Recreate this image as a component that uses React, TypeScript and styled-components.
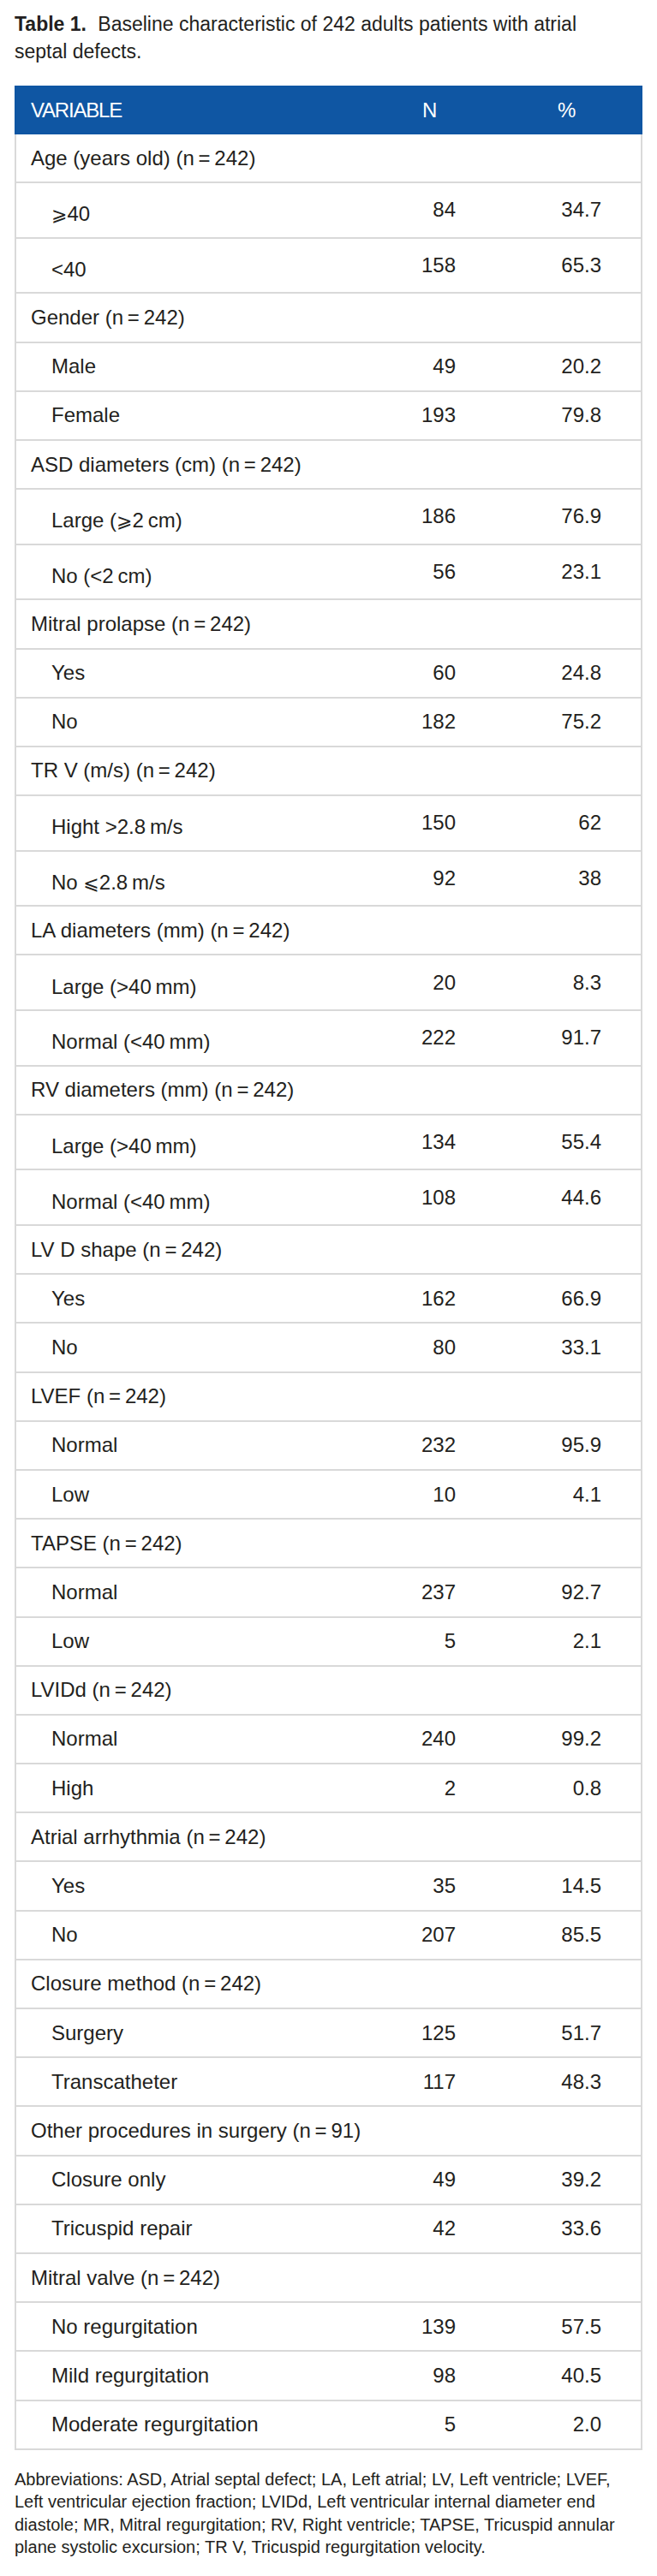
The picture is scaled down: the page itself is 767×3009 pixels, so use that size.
import React from "react";
import styled, { createGlobalStyle } from "styled-components";

const GlobalStyle = createGlobalStyle`
  html, body {
    margin: 0;
    padding: 0;
    background: #fff;
  }

  body {
    font-family: "Liberation Sans", Arial, sans-serif;
    color: #231f20;
  }
`;

const Page = styled.div`
  padding: 12px 17px 18px;
`;

const Caption = styled.p`
  margin: 0;
  font-size: 23px;
  line-height: 32px;
`;

const CaptionLabel = styled.strong`
  font-weight: 700;
  margin-right: 7px;
`;

const Table = styled.div`
  margin-top: 24px;
  display: flex;
  flex-direction: column;
`;

const HeaderRow = styled.div`
  display: grid;
  grid-template-columns: 1fr 77px 199px;
  align-items: center;
  height: 57px;
  padding: 0 2px;
  background: #0f56a3;
  color: #fff;
  font-size: 24px;
`;

const HeadCell = styled.div<{ $indent: number }>`
  padding-left: ${(p) => p.$indent}px;
  letter-spacing: -1.2px;
`;

const Row = styled.div<{ $tall?: boolean }>`
  display: grid;
  grid-template-columns: 1fr 77px 199px;
  align-items: center;
  box-sizing: border-box;
  height: ${(p) => (p.$tall ? "64.6px" : "57.2px")};
  border: 2px solid #d9d9d9;
  border-top: none;
  font-size: 24px;
`;

const Label = styled.div<{ $sub?: boolean; $tall?: boolean }>`
  padding-left: ${(p) => (p.$sub ? 41 : 17)}px;
  padding-top: ${(p) => (p.$tall ? 10 : 0)}px;
  white-space: nowrap;
`;

const Value = styled.div<{ $right: number }>`
  text-align: right;
  padding-right: ${(p) => p.$right}px;
`;

const Sym = styled.span`
  font-family: "DejaVu Sans", "Liberation Sans", sans-serif;
  font-size: 22px;
`;

const Footnote = styled.p`
  margin: 21px 0 0;
  font-size: 20px;
  line-height: 26.5px;
`;

interface RowData {
  label: React.ReactNode;
  n?: string;
  pct?: string;
  sub?: boolean;
  tall?: boolean;
}

const nn = (v: number) => `(n\u2009=\u2009${v})`;

const rows: RowData[] = [
  { label: `Age (years old) ${nn(242)}` },
  { label: <><Sym>⩾</Sym>40</>, n: "84", pct: "34.7", sub: true, tall: true },
  { label: "<40", n: "158", pct: "65.3", sub: true, tall: true },
  { label: `Gender ${nn(242)}` },
  { label: "Male", n: "49", pct: "20.2", sub: true },
  { label: "Female", n: "193", pct: "79.8", sub: true },
  { label: `ASD diameters (cm) ${nn(242)}` },
  { label: <>Large (<Sym>⩾</Sym>2{"\u2009"}cm)</>, n: "186", pct: "76.9", sub: true, tall: true },
  { label: "No (<2\u2009cm)", n: "56", pct: "23.1", sub: true, tall: true },
  { label: `Mitral prolapse ${nn(242)}` },
  { label: "Yes", n: "60", pct: "24.8", sub: true },
  { label: "No", n: "182", pct: "75.2", sub: true },
  { label: `TR V (m/s) ${nn(242)}` },
  { label: "Hight >2.8\u2009m/s", n: "150", pct: "62", sub: true, tall: true },
  { label: <>No <Sym>⩽</Sym>2.8{"\u2009"}m/s</>, n: "92", pct: "38", sub: true, tall: true },
  { label: `LA diameters (mm) ${nn(242)}` },
  { label: "Large (>40\u2009mm)", n: "20", pct: "8.3", sub: true, tall: true },
  { label: "Normal (<40\u2009mm)", n: "222", pct: "91.7", sub: true, tall: true },
  { label: `RV diameters (mm) ${nn(242)}` },
  { label: "Large (>40\u2009mm)", n: "134", pct: "55.4", sub: true, tall: true },
  { label: "Normal (<40\u2009mm)", n: "108", pct: "44.6", sub: true, tall: true },
  { label: `LV D shape ${nn(242)}` },
  { label: "Yes", n: "162", pct: "66.9", sub: true },
  { label: "No", n: "80", pct: "33.1", sub: true },
  { label: `LVEF ${nn(242)}` },
  { label: "Normal", n: "232", pct: "95.9", sub: true },
  { label: "Low", n: "10", pct: "4.1", sub: true },
  { label: `TAPSE ${nn(242)}` },
  { label: "Normal", n: "237", pct: "92.7", sub: true },
  { label: "Low", n: "5", pct: "2.1", sub: true },
  { label: `LVIDd ${nn(242)}` },
  { label: "Normal", n: "240", pct: "99.2", sub: true },
  { label: "High", n: "2", pct: "0.8", sub: true },
  { label: `Atrial arrhythmia ${nn(242)}` },
  { label: "Yes", n: "35", pct: "14.5", sub: true },
  { label: "No", n: "207", pct: "85.5", sub: true },
  { label: `Closure method ${nn(242)}` },
  { label: "Surgery", n: "125", pct: "51.7", sub: true },
  { label: "Transcatheter", n: "117", pct: "48.3", sub: true },
  { label: `Other procedures in surgery ${nn(91)}` },
  { label: "Closure only", n: "49", pct: "39.2", sub: true },
  { label: "Tricuspid repair", n: "42", pct: "33.6", sub: true },
  { label: `Mitral valve ${nn(242)}` },
  { label: "No regurgitation", n: "139", pct: "57.5", sub: true },
  { label: "Mild regurgitation", n: "98", pct: "40.5", sub: true },
  { label: "Moderate regurgitation", n: "5", pct: "2.0", sub: true },
];

const App = () => {
  return (
    <Page>
      <GlobalStyle />
      <Caption>
        <CaptionLabel>Table 1.</CaptionLabel> Baseline characteristic of 242 adults patients with atrial
        <br />
        septal defects.
      </Caption>

      <Table>
        <HeaderRow>
          <HeadCell $indent={17}>VARIABLE</HeadCell>
          <HeadCell $indent={21}>N</HeadCell>
          <HeadCell $indent={102}>%</HeadCell>
        </HeaderRow>
        {rows.map((r, i) => (
          <Row key={i} $tall={r.tall}>
            <Label $sub={r.sub} $tall={r.tall}>
              {r.label}
            </Label>
            <Value $right={17}>{r.n}</Value>
            <Value $right={46}>{r.pct}</Value>
          </Row>
        ))}
      </Table>

      <Footnote>
        Abbreviations: ASD, Atrial septal defect; LA, Left atrial; LV, Left ventricle; LVEF,
        <br />
        Left ventricular ejection fraction; LVIDd, Left ventricular internal diameter end
        <br />
        diastole; MR, Mitral regurgitation; RV, Right ventricle; TAPSE, Tricuspid annular
        <br />
        plane systolic excursion; TR V, Tricuspid regurgitation velocity.
      </Footnote>
    </Page>
  );
};

export default App;
